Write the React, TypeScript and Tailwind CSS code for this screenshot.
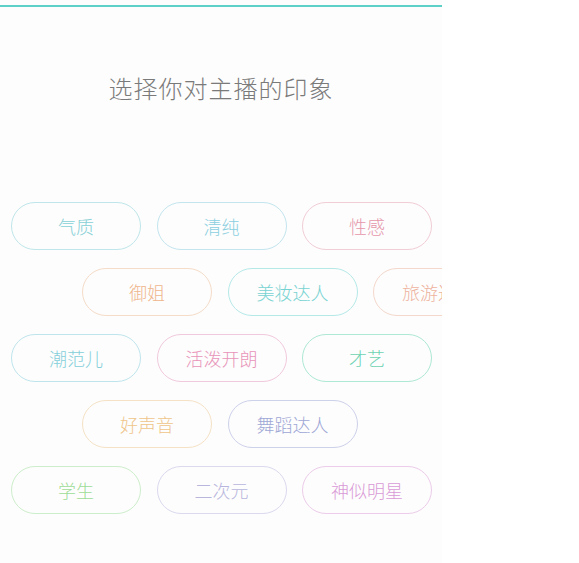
const rows: { pad: string; tags: { label: string; text: string; border: string }[] }[] = [
  {
    pad: "pl-[11px]",
    tags: [
      { label: "气质", text: "text-[#86d0d6]", border: "border-[#bfe6ea]" },
      { label: "清纯", text: "text-[#8ccfe0]", border: "border-[#c3e5ee]" },
      { label: "性感", text: "text-[#e597ab]", border: "border-[#f1cdd6]" },
    ],
  },
  {
    pad: "pl-[82px]",
    tags: [
      { label: "御姐", text: "text-[#efb58c]", border: "border-[#f5dcc8]" },
      { label: "美妆达人", text: "text-[#77d3d2]", border: "border-[#b5e9e8]" },
      { label: "旅游达人", text: "text-[#eeb39d]", border: "border-[#f4d8cc]" },
    ],
  },
  {
    pad: "pl-[11px]",
    tags: [
      { label: "潮范儿", text: "text-[#86cfda]", border: "border-[#bfe5ec]" },
      { label: "活泼开朗", text: "text-[#e894b9]", border: "border-[#f1c9dc]" },
      { label: "才艺", text: "text-[#6dd3b3]", border: "border-[#aee8d6]" },
    ],
  },
  {
    pad: "pl-[82px]",
    tags: [
      { label: "好声音", text: "text-[#efc58b]", border: "border-[#f5e2c6]" },
      { label: "舞蹈达人", text: "text-[#9ea7d6]", border: "border-[#cdd1ea]" },
    ],
  },
  {
    pad: "pl-[11px]",
    tags: [
      { label: "学生", text: "text-[#9ddc98]", border: "border-[#cdeecb]" },
      { label: "二次元", text: "text-[#b8b6dc]", border: "border-[#dad9ee]" },
      { label: "神似明星", text: "text-[#d99ad6]", border: "border-[#ecccea]" },
    ],
  },
]

export default function App() {
  return (
    <div className="h-[563px] w-full bg-white font-['Noto_Sans_CJK_SC','Noto_Sans',sans-serif]">
      <div className="w-[442px] overflow-hidden bg-[#fdfdfd]">
        <div className="mt-[5px] h-[2px] bg-[#5fd0c8]" />
        <h1 className="mt-[65px] text-center text-[24px] leading-[32px] font-light tracking-[1px] text-[#7a7a7a]">
          选择你对主播的印象
        </h1>
        <div className="mt-[98px] flex flex-col gap-[18px] pb-[49px]">
          {rows.map((row, i) => (
            <div key={i} className={`flex gap-[15.5px] ${row.pad}`}>
              {row.tags.map((t) => (
                <div
                  key={t.label}
                  className={`flex h-[48px] w-[130px] shrink-0 items-center justify-center rounded-full border ${t.border} ${t.text} text-[18px] font-light`}
                >
                  {t.label}
                </div>
              ))}
            </div>
          ))}
        </div>
      </div>
    </div>
  )
}
